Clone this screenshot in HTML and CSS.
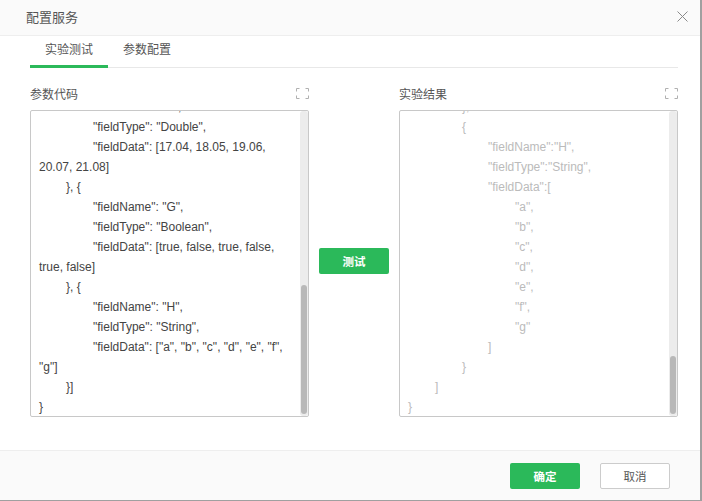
FILE: index.html
```html
<!DOCTYPE html>
<html lang="zh">
<head>
<meta charset="utf-8">
<title>配置服务</title>
<link rel="stylesheet" href="styles.css">
</head>
<body>
<div class="dialog">
  <header class="head">
    <span class="title">配置服务</span>
    <svg class="close" width="11" height="11" viewBox="0 0 11 11"><path d="M.5 .5L10.5 10.5M10.5 .5L.5 10.5" stroke="#8a8a8a" stroke-width="1" fill="none"/></svg>
  </header>
  <main class="body">
    <nav class="tabs">
      <span class="tab active">实验测试</span>
      <span class="tab">参数配置</span>
    </nav>
    <div class="columns">
      <section class="pane">
        <div class="pane-head">
          <span class="pane-title">参数代码</span>
          <svg class="expand" width="13" height="11" viewBox="0 0 13 11"><path d="M.5 3.5V.5H3.5M9.5 .5h3V3.5M12.5 7.5v3H9.5M3.5 10.5H.5V7.5" stroke="#b0b0b0" fill="none"/></svg>
        </div>
        <div class="box">
          <div class="code">
            <div class="ln i2">"fieldName": "F",</div>
            <div class="ln i2">"fieldType": "Double",</div>
            <div class="ln i2">"fieldData": [17.04, 18.05, 19.06,</div>
            <div class="ln">20.07, 21.08]</div>
            <div class="ln i1">}, {</div>
            <div class="ln i2">"fieldName": "G",</div>
            <div class="ln i2">"fieldType": "Boolean",</div>
            <div class="ln i2">"fieldData": [true, false, true, false,</div>
            <div class="ln">true, false]</div>
            <div class="ln i1">}, {</div>
            <div class="ln i2">"fieldName": "H",</div>
            <div class="ln i2">"fieldType": "String",</div>
            <div class="ln i2">"fieldData": ["a", "b", "c", "d", "e", "f",</div>
            <div class="ln">"g"]</div>
            <div class="ln i1">}]</div>
            <div class="ln">}</div>
          </div>
          <div class="track"><div class="thumb thumb-left"></div></div>
        </div>
      </section>
      <div class="middle"><button class="btn primary">测试</button></div>
      <section class="pane">
        <div class="pane-head">
          <span class="pane-title">实验结果</span>
          <svg class="expand" width="13" height="11" viewBox="0 0 13 11"><path d="M.5 3.5V.5H3.5M9.5 .5h3V3.5M12.5 7.5v3H9.5M3.5 10.5H.5V7.5" stroke="#b0b0b0" fill="none"/></svg>
        </div>
        <div class="box">
          <div class="code muted">
            <div class="ln i2">},</div>
            <div class="ln i2">{</div>
            <div class="ln i3">"fieldName":"H",</div>
            <div class="ln i3">"fieldType":"String",</div>
            <div class="ln i3">"fieldData":[</div>
            <div class="ln i4">"a",</div>
            <div class="ln i4">"b",</div>
            <div class="ln i4">"c",</div>
            <div class="ln i4">"d",</div>
            <div class="ln i4">"e",</div>
            <div class="ln i4">"f",</div>
            <div class="ln i4">"g"</div>
            <div class="ln i3">]</div>
            <div class="ln i2">}</div>
            <div class="ln i1">]</div>
            <div class="ln">}</div>
          </div>
          <div class="track"><div class="thumb thumb-right"></div></div>
        </div>
      </section>
    </div>
  </main>
  <footer class="foot">
    <button class="btn primary">确定</button>
    <button class="btn plain">取消</button>
  </footer>
</div>
</body>
</html>
```
FILE: styles.css
```css
html, body { margin: 0; padding: 0; }
body {
  width: 702px; height: 501px; overflow: hidden; background: #a0a0a0;
  font-family: "Liberation Sans", "Noto Sans CJK SC", sans-serif;
}
.dialog { width: 700px; height: 500px; background: #fff; display: flex; flex-direction: column; }
.head {
  height: 35px; flex: none; background: #fafafa; border-bottom: 1px solid #eee;
  display: flex; align-items: center; justify-content: space-between;
  padding: 0 12px 0 26px;
}
.title { font-size: 13px; color: #555; margin-top: -2px; }
.close { display: block; margin-top: -3px; }
.body { flex: 1; min-height: 0; padding: 0 22px 0 30px; }
.tabs { display: flex; height: 31px; border-bottom: 1px solid #e8e8e8; }
.tab { width: 78px; font-size: 12px; color: #555; text-align: center; line-height: 28px; box-sizing: border-box; height: 32px; }
.tab.active { border-bottom: 3px solid #2bb95a; }
.columns { display: flex; padding-top: 10px; }
.pane { width: 279px; flex: none; }
.pane-head { height: 32px; display: flex; justify-content: space-between; align-items: center; box-sizing: border-box; padding-bottom: 1px; }
.pane-title { font-size: 12px; color: #555; }
.expand { display: block; margin-top: -1px; }
.box {
  height: 307px; box-sizing: border-box; border: 1px solid #c8c8c8; border-radius: 2px;
  position: relative; overflow: hidden;
}
.code { height: 100%; box-sizing: border-box; overflow: hidden; display: flex; flex-direction: column; justify-content: flex-end; padding: 0 8px; font-size: 12px; line-height: 20px; color: #444; }
.code.muted { color: #bbb; }
.ln { flex: none; white-space: nowrap; position: relative; top: 1px; }
.i1 { padding-left: 27px; }
.i2 { padding-left: 54px; }
.i3 { padding-left: 80px; }
.i4 { padding-left: 107px; }
.track { position: absolute; top: 0; right: 0; bottom: 0; width: 8px; background: #ececec; border-radius: 3px; }
.thumb { position: absolute; left: 1px; right: 1px; bottom: 2px; background: #b8b8b8; border-radius: 3px; }
.thumb-left { height: 129px; }
.thumb-right { height: 58px; }
.middle { width: 90px; flex: none; display: flex; justify-content: center; padding-top: 170px; box-sizing: border-box; align-items: flex-start; }
.btn { box-sizing: border-box; width: 70px; height: 26px; padding: 0; border-radius: 2px; font: 11.5px "Liberation Sans", "Noto Sans CJK SC", sans-serif; }
.primary { background: #2bb95a; color: #fff; border: 0; font-weight: 700; }
.plain { background: #fff; color: #555; border: 1px solid #ccc; }
.foot {
  height: 50px; flex: none; box-sizing: border-box; background: #fafafa; border-top: 1px solid #eee;
  display: flex; justify-content: flex-end; align-items: center; gap: 20px; padding: 0 30px 0 0;
}
```
